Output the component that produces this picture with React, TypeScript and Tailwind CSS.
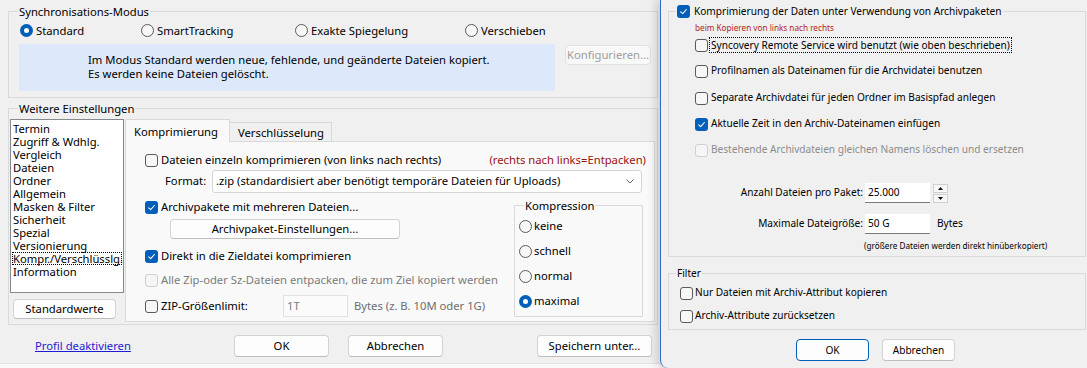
import React from "react";

type Kids = { children?: React.ReactNode; className?: string };

const sections = [
  "Termin",
  "Zugriff & Wdhlg.",
  "Vergleich",
  "Dateien",
  "Ordner",
  "Allgemein",
  "Masken & Filter",
  "Sicherheit",
  "Spezial",
  "Versionierung",
  "Kompr./Verschlüsslg.",
  "Information",
];

function Box({ checked = false, disabled = false }: { checked?: boolean; disabled?: boolean }) {
  if (checked) {
    return (
      <span className="flex h-[13px] w-[13px] shrink-0 items-center justify-center rounded-[3px] bg-[#005fb8]">
        <svg width="9" height="9" viewBox="0 0 9 9" fill="none">
          <path d="M1.7 4.8 3.7 6.6 7.4 2.5" stroke="#fff" strokeWidth="1.1" strokeLinecap="round" strokeLinejoin="round" />
        </svg>
      </span>
    );
  }
  return (
    <span
      className={
        disabled
          ? "h-[13px] w-[13px] shrink-0 rounded-[3px] border border-[#d0d0d0] bg-[#f6f6f6]"
          : "h-[13px] w-[13px] shrink-0 rounded-[3px] border border-[#5a5a5a] bg-[#f7f7f7]"
      }
    />
  );
}

function Radio({ checked = false }: { checked?: boolean }) {
  if (checked) {
    return (
      <span className="flex h-[13px] w-[13px] shrink-0 items-center justify-center rounded-full bg-[#005fb8]">
        <span className="h-[5px] w-[5px] rounded-full bg-white" />
      </span>
    );
  }
  return <span className="h-[13px] w-[13px] shrink-0 rounded-full border border-[#5a5a5a] bg-[#f7f7f7]" />;
}

function Btn({ children, className = "", disabled = false, primary = false }: Kids & { disabled?: boolean; primary?: boolean }) {
  const tone = disabled
    ? "border-[#e2e2e2] bg-[#f8f8f8] text-[#9d9d9d]"
    : primary
      ? "border-[#005fb8] bg-[#fdfdfd]"
      : "border-[#d3d3d3] border-b-[#bdbdbd] bg-[#fdfdfd]";
  return (
    <button type="button" className={`flex shrink-0 items-center justify-center rounded-[4px] border leading-none ${tone} ${className}`}>
      {children}
    </button>
  );
}

function MainDialog() {
  return (
    <div className="flex h-[368px] w-[660px] shrink-0 flex-col pl-[8px] text-[11.25px]">
      {/* Synchronisations-Modus */}
      <div className="mt-[11px] h-[87px] w-[650px] border border-[#dadada]">
        <div className="-mt-[8px] ml-[9px] w-fit bg-[#f0f0f0] px-[1px] leading-[15px]">Synchronisations-Modus</div>
        <div className="ml-[11px] mt-[3px] flex h-[16px] items-center leading-[15px]">
          <label className="flex w-[121px] items-center gap-[3px]">
            <Radio checked />
            Standard
          </label>
          <label className="flex w-[154px] items-center gap-[3px]">
            <Radio />
            SmartTracking
          </label>
          <label className="flex w-[170px] items-center gap-[3px]">
            <Radio />
            Exakte Spiegelung
          </label>
          <label className="flex items-center gap-[3px]">
            <Radio />
            Verschieben
          </label>
        </div>
        <div className="ml-[10px] mt-[6px] flex items-start">
          <div className="h-[47px] w-[536px] bg-[#dde9fa] pl-[69px] pt-[9px] leading-[14px]">
            <div>Im Modus Standard werden neue, fehlende, und geänderte Dateien kopiert.</div>
            <div>Es werden keine Dateien gelöscht.</div>
          </div>
          <Btn disabled className="ml-[10px] mt-[1px] h-[20px] w-[86px]">
            Konfigurieren...
          </Btn>
        </div>
      </div>

      {/* Weitere Einstellungen */}
      <div className="mt-[10px] h-[217px] w-[650px] border border-[#dadada]">
        <div className="-mt-[8px] ml-[9px] w-fit bg-[#f0f0f0] px-[1px] leading-[15px]">Weitere Einstellungen</div>
        <div className="flex items-start">
          <div className="ml-[1px] mt-[3px] flex flex-col">
            <div className="h-[174px] w-[114px] border border-[#85888e] bg-white pl-[1px] pr-[1px] pt-[2px]">
              {sections.map((s) => (
                <div
                  key={s}
                  className={
                    s === "Kompr./Verschlüsslg."
                      ? "pl-[1px] leading-[13px] outline-1 -outline-offset-1 outline-black outline-dotted"
                      : "pl-[1px] leading-[13px]"
                  }
                >
                  {s}
                </div>
              ))}
            </div>
            <Btn className="ml-[3px] mt-[6px] h-[20px] w-[103px]">Standardwerte</Btn>
          </div>

          {/* Tabs */}
          <div className="ml-[1px] mt-[3px] w-[530px]">
            <div className="flex h-[22px] items-start">
              <div className="relative z-10 h-[23px] w-[105px] border-l border-r border-t border-[#d9d9d9] bg-[#f9f9f9] pl-[8px] pt-[4px] leading-[15px]">
                Komprimierung
              </div>
              <div className="mt-[3px] h-[19px] w-[102px] border-r border-t border-[#d9d9d9] bg-[#f0f0f0] pl-[8px] pt-[2px] leading-[15px]">
                Verschlüsselung
              </div>
            </div>
            <div className="h-[181px] border border-[#d9d9d9] bg-[#f9f9f9]">
              <div className="mt-[10px] flex h-[16px] items-center justify-between pl-[19px] pr-[8px]">
                <div className="flex items-center">
                  <Box />
                  <span className="ml-[3px]">Dateien einzeln komprimieren (von links nach rechts)</span>
                </div>
                <span className="text-[#9b1111]">(rechts nach links=Entpacken)</span>
              </div>
              <div className="mt-[2px] flex h-[23px] items-center pl-[39px]">
                <span className="w-[47px]">Format:</span>
                <div className="flex h-[23px] w-[430px] items-center justify-between rounded-[3px] border border-[#d5d5d5] bg-white pl-[3px] pr-[7px]">
                  <span>.zip (standardisiert aber benötigt temporäre Dateien für Uploads)</span>
                  <svg width="8" height="5" viewBox="0 0 8 5" fill="none">
                    <path d="M0.5 0.5 4 4 7.5 0.5" stroke="#6b6b6b" strokeWidth="1" />
                  </svg>
                </div>
              </div>
              <div className="flex items-start">
                <div className="flex flex-1 flex-col pl-[19px]">
                  <div className="mt-[6px] flex h-[16px] items-center">
                    <Box checked />
                    <span className="ml-[3px]">Archivpakete mit mehreren Dateien...</span>
                  </div>
                  <Btn className="ml-[25px] mt-[4px] h-[20px] w-[230px]">Archivpaket-Einstellungen...</Btn>
                  <div className="mt-[9px] flex h-[16px] items-center">
                    <Box checked />
                    <span className="ml-[3px]">Direkt in die Zieldatei komprimieren</span>
                  </div>
                  <div className="mt-[8px] flex h-[16px] items-center text-[#7b7b7b]">
                    <Box disabled />
                    <span className="ml-[3px]">Alle Zip-oder Sz-Dateien entpacken, die zum Ziel kopiert werden</span>
                  </div>
                  <div className="mt-[7px] flex h-[22px] items-center">
                    <div className="flex w-[138px] items-center">
                      <Box />
                      <span className="ml-[3px]">ZIP-Größenlimit:</span>
                    </div>
                    <div className="flex h-[22px] w-[65px] items-center border border-[#e1e1e1] bg-[#fbfbfb] pl-[3px] text-[#7b7b7b]">
                      1T
                    </div>
                    <span className="ml-[6px] text-[#6e6e6e]">Bytes (z. B. 10M oder 1G)</span>
                  </div>
                </div>
                <div className="mr-[11px] mt-[12px] h-[112px] w-[129px] border border-[#dadada]">
                  <div className="-mt-[8px] ml-[9px] w-fit bg-[#f9f9f9] px-[1px] leading-[15px]">Kompression</div>
                  <div className="flex flex-col pl-[4px]">
                    <label className="mt-[5px] flex h-[16px] items-center gap-[2px]">
                      <Radio />
                      keine
                    </label>
                    <label className="mt-[9px] flex h-[16px] items-center gap-[2px]">
                      <Radio />
                      schnell
                    </label>
                    <label className="mt-[9px] flex h-[16px] items-center gap-[2px]">
                      <Radio />
                      normal
                    </label>
                    <label className="mt-[9px] flex h-[16px] items-center gap-[2px]">
                      <Radio checked />
                      maximal
                    </label>
                  </div>
                </div>
              </div>
            </div>
          </div>
        </div>
      </div>

      {/* Buttons */}
      <div className="mt-[10px] flex h-[22px] items-center">
        <div className="w-[226px] pl-[27px]">
          <span className="text-[#1c1cd0] underline">Profil deaktivieren</span>
        </div>
        <Btn className="h-[22px] w-[95px]">OK</Btn>
        <Btn className="ml-[19px] h-[22px] w-[95px]">Abbrechen</Btn>
        <Btn className="ml-[94px] h-[22px] w-[115px]">Speichern unter...</Btn>
      </div>
      <div className="-ml-[8px] mt-auto h-[5px] border-t border-[#e2e2e2] bg-[#f8f8f8]" />
    </div>
  );
}

function ArchiveDialog() {
  return (
    <div className="relative z-10 flex h-[368px] w-[427px] shrink-0 flex-col rounded-bl-[8px] border-l border-[#2c6fc4] bg-[#f0f0f0] pl-[7px] text-[10.1px] shadow-[-5px_0_9px_rgba(0,0,0,0.13)]">
      <div className="mt-[11px] h-[246px] w-[418px] border border-[#dadada]">
        <div className="-mt-[8px] ml-[7px] flex h-[15px] w-fit items-center bg-[#f0f0f0] px-[1px]">
          <Box checked />
          <span className="ml-[4px] pr-[1px]">Komprimierung der Daten unter Verwendung von Archivpaketen</span>
        </div>
        <div className="ml-[26px] mt-[3px] text-[8.2px] leading-[12px] text-[#b01c1c]">beim Kopieren von links nach rechts</div>
        <div className="ml-[26px] mt-[3px] flex h-[16px] items-center">
          <Box />
          <span className="ml-[2px] px-[1px] leading-[14px] outline-1 outline-black outline-dotted">
            Syncovery Remote Service wird benutzt (wie oben beschrieben)
          </span>
        </div>
        <div className="ml-[26px] mt-[10px] flex h-[16px] items-center">
          <Box />
          <span className="ml-[3px]">Profilnamen als Dateinamen für die Archvidatei benutzen</span>
        </div>
        <div className="ml-[26px] mt-[11px] flex h-[16px] items-center">
          <Box />
          <span className="ml-[3px]">Separate Archivdatei für jeden Ordner im Basispfad anlegen</span>
        </div>
        <div className="ml-[26px] mt-[10px] flex h-[16px] items-center">
          <Box checked />
          <span className="ml-[3px]">Aktuelle Zeit in den Archiv-Dateinamen einfügen</span>
        </div>
        <div className="ml-[26px] mt-[10px] flex h-[16px] items-center text-[#8c8c8c]">
          <Box disabled />
          <span className="ml-[3px]">Bestehende Archivdateien gleichen Namens löschen und ersetzen</span>
        </div>

        <div className="mt-[25px] flex h-[20px] items-center">
          <span className="w-[194px] text-right">Anzahl Dateien pro Paket:</span>
          <div className="ml-[2px] flex h-[20px] w-[65px] items-center border-b border-b-[#7a7a7a] bg-white pl-[3px]">25.000</div>
          <div className="ml-[3px] flex h-[19px] w-[15px] flex-col gap-[1px]">
            <div className="flex h-[9px] items-center justify-center border border-[#cfcfcf] bg-[#f7f7f7]">
              <svg width="5" height="3" viewBox="0 0 5 3">
                <path d="M0 3 2.5 0 5 3Z" fill="#111" />
              </svg>
            </div>
            <div className="flex h-[9px] items-center justify-center border border-[#cfcfcf] bg-[#f7f7f7]">
              <svg width="5" height="3" viewBox="0 0 5 3">
                <path d="M0 0 2.5 3 5 0Z" fill="#111" />
              </svg>
            </div>
          </div>
        </div>
        <div className="mt-[11px] flex h-[20px] items-center">
          <span className="w-[194px] text-right">Maximale Dateigröße:</span>
          <div className="ml-[2px] flex h-[20px] w-[65px] items-center border-b border-b-[#7a7a7a] bg-white pl-[3px]">50 G</div>
          <span className="ml-[7px]">Bytes</span>
        </div>
        <div className="ml-[195px] mt-[6px] text-[8.2px] leading-[11px]">(größere Dateien werden direkt hinüberkopiert)</div>
      </div>

      <div className="mt-[16px] h-[57px] w-[418px] border border-[#dadada]">
        <div className="-mt-[8px] ml-[7px] w-fit bg-[#f0f0f0] px-[1px] leading-[15px]">Filter</div>
        <div className="ml-[11px] mt-[4px] flex h-[16px] items-center">
          <Box />
          <span className="ml-[2px]">Nur Dateien mit Archiv-Attribut kopieren</span>
        </div>
        <div className="ml-[11px] mt-[7px] flex h-[16px] items-center">
          <Box />
          <span className="ml-[2px]">Archiv-Attribute zurücksetzen</span>
        </div>
      </div>

      <div className="mt-[9px] flex">
        <Btn primary className="ml-[128px] h-[22px] w-[73px]">
          OK
        </Btn>
        <Btn className="ml-[13px] h-[22px] w-[73px]">Abbrechen</Btn>
      </div>
    </div>
  );
}

export default function App() {
  return (
    <div className="flex h-[368px] w-[1087px] overflow-hidden bg-[#f0f0f0] font-['Noto_Sans',sans-serif] text-black">
      <MainDialog />
      <ArchiveDialog />
    </div>
  );
}
